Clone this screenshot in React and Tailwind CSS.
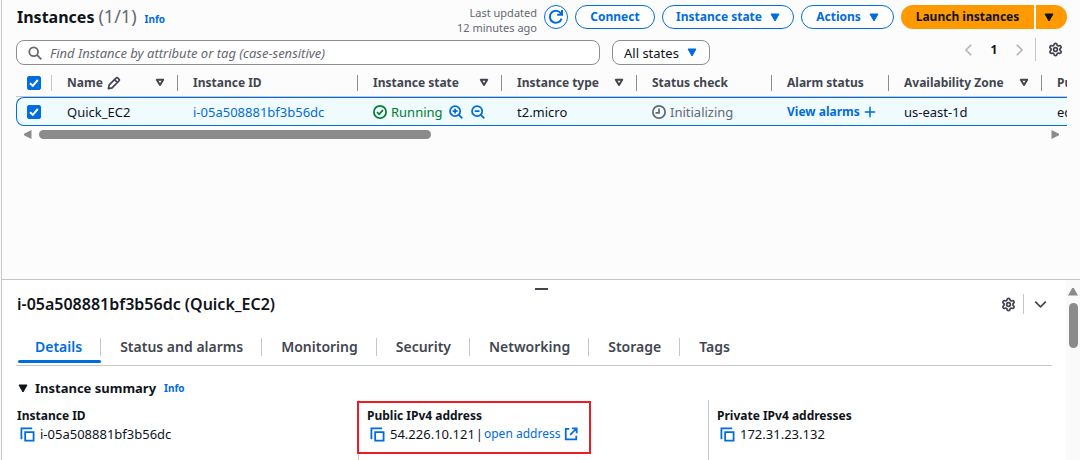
import { useState } from "react";
import { Settings } from "lucide-react";

function Caret({ className = "" }) {
  return (
    <svg viewBox="0 0 10 9" className={`h-[9px] w-[10px] shrink-0 ${className}`} fill="currentColor" stroke="currentColor" strokeWidth="1" strokeLinejoin="round" aria-hidden="true">
      <path d="M1 1h8L5 8z" />
    </svg>
  );
}

function SortIcon() {
  return (
    <svg viewBox="0 0 10 9" className="h-[9px] w-[10px] shrink-0" fill="none" stroke="currentColor" strokeWidth="2" strokeLinejoin="round" aria-hidden="true">
      <path d="M1.8 1.800h6.400L5 7z" />
    </svg>
  );
}

function Icon({ children, className = "size-4", width = 2 }) {
  return (
    <svg viewBox="0 0 16 16" className={`shrink-0 ${className}`} fill="none" stroke="currentColor" strokeWidth={width} strokeLinejoin="round" aria-hidden="true">
      {children}
    </svg>
  );
}

function CopyIcon() {
  return (
    <Icon className="size-[15px]">
      <path d="M5.500 5.500h9v9h-9z" strokeWidth="1.9" strokeLinejoin="miter" />
      <path d="M2.500 12H1.500V1.500H12v1" strokeWidth="1.9" strokeLinejoin="miter" />
    </Icon>
  );
}

function Checkbox({ label }) {
  const [checked, setChecked] = useState(true);
  return (
    <span className="grid size-[14px] place-items-center">
      <input
        type="checkbox"
        aria-label={label}
        checked={checked}
        onChange={(e) => setChecked(e.target.checked)}
        className="[grid-area:1/1] size-[14px] cursor-pointer appearance-none rounded-[2px] border border-[#8c8c94] bg-white checked:border-[#006ce0] checked:bg-[#006ce0]"
      />
      {checked && (
        <svg viewBox="0 0 14 14" className="pointer-events-none [grid-area:1/1] size-[14px] text-white" fill="none" stroke="currentColor" strokeWidth="2" aria-hidden="true">
          <path d="M3 7.2l2.8 2.6L10.8 4" />
        </svg>
      )}
    </span>
  );
}

const columns = [
  { name: "Name", width: "w-[126px]", sort: true, edit: true },
  { name: "Instance ID", width: "w-[180px]" },
  { name: "Instance state", width: "w-[144px]", sort: true },
  { name: "Instance type", width: "w-[135px]", sort: true },
  { name: "Status check", width: "w-[135px]" },
  { name: "Alarm status", width: "w-[117px]" },
  { name: "Availability Zone", width: "w-[153px]", sort: true },
  { name: "Public IPv4 DNS", width: "w-[140px]" },
];

const tabs = ["Details", "Status and alarms", "Monitoring", "Security", "Networking", "Storage", "Tags"];

const pill = "flex h-6 items-center justify-center rounded-full border border-[#006ce0] bg-white text-[12px] font-bold text-[#006ce0]";

function Toolbar() {
  return (
    <header className="flex h-6 items-center justify-between">
      <h1 className="flex items-baseline pl-px text-[16px] leading-6 font-bold text-[#0f141a]">
        Instances
        <span className="ml-1 text-[18px] font-normal text-[#656871]">(1/1)</span>
        <a href="#info" className="ml-2 text-[10px] text-[#006ce0]">Info</a>
      </h1>
      <div className="flex items-center gap-[7px]">
        <p className="h-6 text-right text-[11px] leading-[15px] text-[#656871]">
          Last updated
          <br />
          12 minutes ago
        </p>
        <button aria-label="Refresh" className={`${pill} w-6`}>
          <Icon className="size-4">
            <path d="M13.6 9.6A6 6 0 1 1 13.2 5" />
            <path d="M14 1v4.8H9.2" strokeLinejoin="miter" />
          </Icon>
        </button>
        <button className={`${pill} w-20`}>Connect</button>
        <button className={`${pill} w-[132px] gap-2`}>Instance state<Caret /></button>
        <button className={`${pill} w-[93px] gap-2`}>Actions<Caret /></button>
        <div className="flex gap-0.5 text-[#0f141a]">
          <button className="h-6 w-[133px] rounded-l-full bg-[#ff9900] text-[12px] font-bold">Launch instances</button>
          <button aria-label="More launch options" className="flex h-6 w-[31px] items-center rounded-r-full bg-[#ff9900] pl-2">
            <Caret />
          </button>
        </div>
      </div>
    </header>
  );
}

function Filters() {
  return (
    <div className="mt-[11px] flex h-[25px] items-center gap-3">
      <label className="flex h-[25px] w-[584px] items-center gap-2 rounded-lg border border-[#8c8c94] bg-white pl-[11px] text-[#656871]">
        <Icon className="size-[14px]">
          <circle cx="6.5" cy="6.5" r="5" />
          <path d="M10.2 10.2l5 5" />
        </Icon>
        <input
          aria-label="Find instances"
          placeholder="Find Instance by attribute or tag (case-sensitive)"
          className="min-w-0 flex-1 bg-transparent outline-none placeholder:text-[#656871] placeholder:italic"
        />
      </label>
      <div className="relative flex">
        <select aria-label="Instance state filter" className="h-[25px] w-[98px] appearance-none rounded-lg border border-[#8c8c94] bg-white pl-[11px] text-[#0f141a]">
          <option>All states</option>
        </select>
        <span className="pointer-events-none absolute top-2 right-[13px] flex text-[#006ce0]"><Caret /></span>
      </div>
      <nav aria-label="Pagination" className="ml-auto flex h-[19px] items-center self-start text-[#b4b4bb]">
        <button aria-label="Previous page">
          <Icon className="size-[14px]"><path d="M10.5 2L4.5 8l6 6" /></Icon>
        </button>
        <button className="w-9 text-[12px] font-bold text-[#0f141a]">1</button>
        <button aria-label="Next page">
          <Icon className="size-[14px]"><path d="M5.5 2l6 6-6 6" /></Icon>
        </button>
        <span className="ml-[9px] h-[23px] w-px bg-[#c6c6cd]" />
        <button aria-label="Preferences" className="ml-3 pr-1 text-[#424650]">
          <Settings size={15} strokeWidth={2.8} />
        </button>
      </nav>
    </div>
  );
}

function InstancesTable() {
  const cell = "h-[29px] border-y border-[#006ce0] bg-[#f0fbff] p-0 pl-[15px]";
  return (
    <div className="overflow-hidden">
      <table className="w-full min-w-[1166px] table-fixed border-separate border-spacing-0 text-left whitespace-nowrap">
        <thead>
          <tr className="text-[12px] text-[#424650]">
            <th scope="col" className="h-8 w-9 border-b border-[#c6c6cd] p-0 pt-1 pl-[11px]">
              <div className="flex items-center justify-between">
                <Checkbox label="Select all instances" />
                <span className="h-4 w-px bg-[#c6c6cd]" />
              </div>
            </th>
            {columns.map((c) => (
              <th key={c.name} scope="col" className={`${c.width} border-b border-[#c6c6cd] p-0 pt-1 pl-[15px] font-bold`}>
                <div className="flex items-center">
                  {c.name}
                  {c.edit && (
                    <Icon className="ml-1 size-[14px]">
                      <path d="M1.6 14.4l.9-4.2 7.8-7.8a1.5 1.5 0 0 1 2.1 0l1.2 1.2a1.5 1.5 0 0 1 0 2.1l-7.8 7.8zM8.6 4.2l3.2 3.2" />
                    </Icon>
                  )}
                  <span className="ml-auto flex items-center gap-3">
                    {c.sort && <SortIcon />}
                    <span className="h-4 w-px bg-[#8c8c94]" />
                  </span>
                </div>
              </th>
            ))}
          </tr>
        </thead>
        <tbody>
          <tr className="text-[#0f141a]">
            <td className="h-[29px] rounded-l-lg border border-r-0 border-[#006ce0] bg-[#f0fbff] p-0 pl-[10px]">
              <Checkbox label="Select Quick_EC2" />
            </td>
            <td className={cell}>Quick_EC2</td>
            <td className={cell}><a href="#instance" className="text-[#006ce0]">i-05a508881bf3b56dc</a></td>
            <td className={cell}>
              <div className="flex items-center text-[#00802f]">
                <Icon className="size-[14px]">
                  <circle cx="8" cy="8" r="7" />
                  <path d="M4.6 8l2.5 2.6 4.3-4.8" />
                </Icon>
                <span className="ml-1">Running</span>
                <button aria-label="Filter by running" className="ml-[6px] text-[#006ce0]">
                  <Icon className="size-[14px]">
                    <circle cx="7" cy="7" r="5.8" />
                    <path d="M11.2 11.2l4 4M7 4.2v5.6M4.2 7h5.6" />
                  </Icon>
                </button>
                <button aria-label="Exclude running" className="ml-2 text-[#006ce0]">
                  <Icon className="size-[14px]">
                    <circle cx="7" cy="7" r="5.8" />
                    <path d="M11.2 11.2l4 4M4.2 7h5.6" />
                  </Icon>
                </button>
              </div>
            </td>
            <td className={cell}>t2.micro</td>
            <td className={cell}>
              <div className="flex items-center gap-1 text-[#656871]">
                <Icon className="size-[14px]">
                  <circle cx="8" cy="8" r="7" />
                  <path d="M8 4v5H4" strokeLinejoin="miter" />
                </Icon>
                Initializing
              </div>
            </td>
            <td className={cell}>
              <button className="flex items-center gap-1 text-[12px] font-bold text-[#006ce0]">
                View alarms
                <Icon className="size-3"><path d="M8 1v14M1 8h14" /></Icon>
              </button>
            </td>
            <td className={cell}>us-east-1d</td>
            <td className={cell}>ec2-54-226-10-121</td>
          </tr>
        </tbody>
      </table>
    </div>
  );
}

function HorizontalScrollbar() {
  return (
    <div className="flex h-[17px] items-center px-2 text-[#8b8b8b]" aria-hidden="true">
      <svg viewBox="0 0 8 9" className="h-[9px] w-2" fill="currentColor"><path d="M7.5 0v9L0 5.2v-1.4z" /></svg>
      <div className="mx-[7px] flex-1">
        <div className="h-[9px] w-[39%] rounded-full bg-[#8b8b8b]" />
      </div>
      <svg viewBox="0 0 8 9" className="h-[9px] w-2" fill="currentColor"><path d="M.5 0v9L8 5.2v-1.4z" /></svg>
    </div>
  );
}

function Field({ label, className = "", children }) {
  return (
    <div className={`h-[60px] border-l pt-[7px] pl-2 ${className}`}>
      <dt className="text-[12px] leading-[18px] font-bold">{label}</dt>
      <dd className="flex items-center pl-[3px] leading-[18px]">
        <button aria-label={`Copy ${label}`} className="mr-[5px] text-[#006ce0]"><CopyIcon /></button>
        {children}
      </dd>
    </div>
  );
}

function DetailsPanel() {
  const [active, setActive] = useState("Details");
  return (
    <section className="flex border-t border-[#c6c6cd] bg-white text-[#0f141a]">
      <div className="min-w-0 flex-1">
        <div className="flex h-[14px] items-center justify-center pt-1 pl-[14px]">
          <span className="h-0.5 w-[13px] bg-[#424650]" />
        </div>
        <div className="flex items-center justify-between pr-[19px] pl-[15px]">
          <h2 className="text-[16px] leading-5 font-semibold">i-05a508881bf3b56dc (Quick_EC2)</h2>
          <div className="flex items-center text-[#424650]">
            <button aria-label="Panel preferences"><Settings size={15} strokeWidth={2.8} /></button>
            <span className="ml-[7px] h-5 w-px bg-[#c6c6cd]" />
            <button aria-label="Collapse panel" className="ml-[10px]">
              <Icon className="size-[13px]"><path d="M1.5 4.5L8 11l6.500-6.500" /></Icon>
            </button>
          </div>
        </div>
        <div role="tablist" className="mx-[14px] flex h-[52px] border-b border-[#c6c6cd] pt-5 text-[14px] font-semibold">
          {tabs.map((t, i) => (
            <button
              key={t}
              role="tab"
              aria-selected={t === active}
              onClick={() => setActive(t)}
              className={`flex flex-col ${t === active ? "text-[#006ce0]" : "text-[#424650]"}`}
            >
              <span className={`my-1 flex h-[18px] items-center pr-[18px] pl-[19px] ${i < tabs.length - 1 ? "border-r border-[#c6c6cd]" : ""}`}>{t}</span>
              {t === active && <span className="ml-0.5 h-[3px] self-stretch rounded-full bg-[#006ce0]" />}
            </button>
          ))}
        </div>
        <h3 className="mt-3 flex items-center pl-4 text-[13px] leading-5 font-bold">
          <Caret />
          <span className="ml-[7px]">Instance summary</span>
          <a href="#summary-info" className="ml-2 text-[10px] text-[#006ce0]">Info</a>
        </h3>
        <dl className="mt-0.5 grid grid-cols-3 pr-2 pl-[6px]">
          <Field label="Instance ID" className="border-transparent">i-05a508881bf3b56dc</Field>
          <Field label="Public IPv4 address" className="relative border-[#c6c6cd]">
            <span className="pointer-events-none absolute top-px -left-0.5 h-[53px] w-[234px] border-2 border-[#ed1c24]" />
            54.226.10.121
            <span className="px-px">|</span>
            <a href="#open-address" className="flex items-center gap-1 text-[12px] text-[#006ce0]">
              open address
              <Icon className="size-[14px]">
                <path d="M6 2H2v12h12v-4M9 1.500h5.500V7M14 2L7 9" strokeLinejoin="miter" />
              </Icon>
            </a>
          </Field>
          <Field label="Private IPv4 addresses" className="border-[#c6c6cd]">172.31.23.132</Field>
        </dl>
      </div>
      <div className="flex w-[14px] flex-col items-center bg-[#fafafa] pt-2 text-[#8b8b8b]" aria-hidden="true">
        <svg viewBox="0 0 10 8" className="h-2 w-[10px]" fill="currentColor"><path d="M0 7.500L4.200 0h1.600L10 7.500z" /></svg>
        <div className="mt-[7px] h-[45px] w-[9px] rounded-full bg-[#8b8b8b]" />
      </div>
    </section>
  );
}

export default function App() {
  return (
    <div className="flex min-h-screen flex-col bg-[#fcfcfd] pl-px font-['Noto_Sans',sans-serif] text-[13px] leading-[18px]">
      <div className="flex flex-1 flex-col border-l border-[#c6c6cd]">
        <main className="flex-1 pt-[5px] pr-[13px] pl-[14px]">
          <Toolbar />
          <Filters />
          <InstancesTable />
          <HorizontalScrollbar />
        </main>
        <DetailsPanel />
      </div>
    </div>
  );
}
